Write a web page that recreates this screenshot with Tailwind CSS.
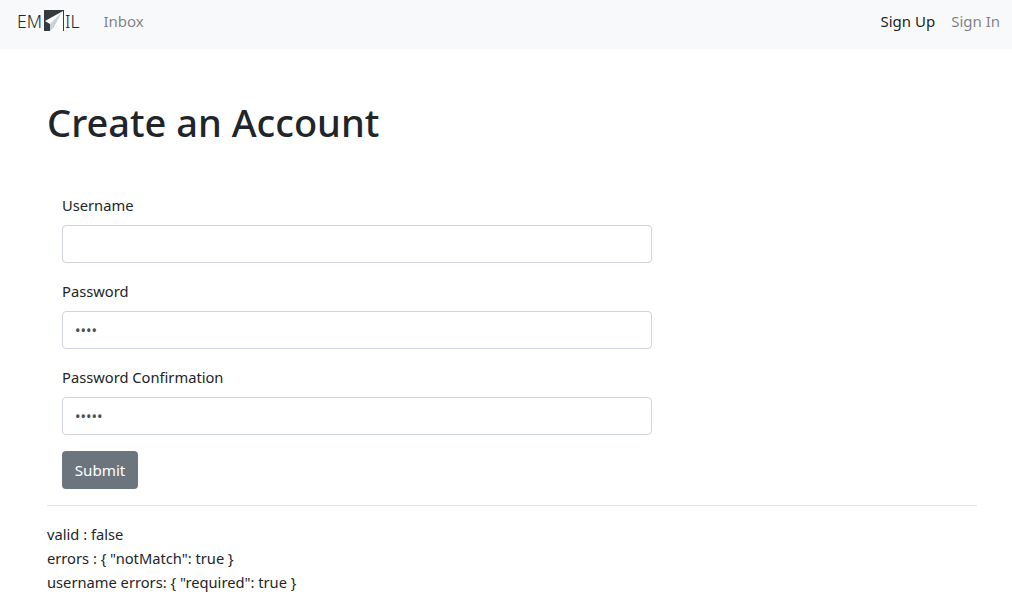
<!DOCTYPE html>
<html lang="en">
<head>
  <meta charset="UTF-8">
  <title>Email - Sign Up</title>
  <script src="https://cdn.jsdelivr.net/npm/@tailwindcss/browser@4"></script>
</head>
<body class="bg-white text-[#212529] font-['Noto_Sans',sans-serif] text-[14.7px] leading-6 overflow-hidden">
  <!-- Navigation Bar -->
  <nav class="h-[49px] bg-[#f8f9fa] pl-[17px] pr-3 pb-2 flex justify-between items-center text-[15px]">
    <div class="flex items-center">
      <a href="#" class="flex items-center text-[17.5px] font-light text-[#212529]">
        <span class="w-[27px]">EM</span>
        <svg class="w-[20px] h-[21px]" viewBox="0 0 20 21">
          <rect width="20" height="21" fill="#343a40"/>
          <path d="M19 1 L1 11 L6 14 L6 21 L19 21 Z" fill="#fff"/>
          <path d="M18 2 L6 14 L6 21 L10 17 Z" fill="#c5d3e0"/>
        </svg>
        <span class="ml-[1px]">IL</span>
      </a>
      <a href="#" class="ml-[24px] text-[#00000080]">Inbox</a>
    </div>
    <div class="flex items-center gap-4">
      <a href="#" class="text-[#000000e6]">Sign Up</a>
      <a href="#" class="text-[#00000080]">Sign In</a>
    </div>
  </nav>

  <!-- Form -->
  <main class="w-[930px] ml-[47px]">
    <h1 class="mt-[45px] text-[38px] leading-[56px] font-medium">Create an Account</h1>
    <form class="mt-[43px] px-[15px] w-[620px]">
      <div class="mb-4">
        <label class="block mb-2">Username</label>
        <input type="text" class="block w-full h-[38px] px-3 bg-white border border-[#ced4da] rounded">
      </div>
      <div class="mb-4">
        <label class="block mb-2">Password</label>
        <input type="password" value="1234" class="block w-full h-[38px] px-3 bg-white border border-[#ced4da] rounded text-[#495057]">
      </div>
      <div class="mb-4">
        <label class="block mb-2">Password Confirmation</label>
        <input type="password" value="12345" class="block w-full h-[38px] px-3 bg-white border border-[#ced4da] rounded text-[#495057]">
      </div>
      <button type="button" class="block h-[38px] w-[76px] bg-[#6c757d] text-white text-[15.2px] rounded">Submit</button>
    </form>
    <hr class="mt-4 border-[#0000001a]">
    <div class="mt-4">
      <p>valid : false</p>
      <p>errors : { "notMatch": true }</p>
      <p>username errors: { "required": true }</p>
    </div>
  </main>
</body>
</html>
